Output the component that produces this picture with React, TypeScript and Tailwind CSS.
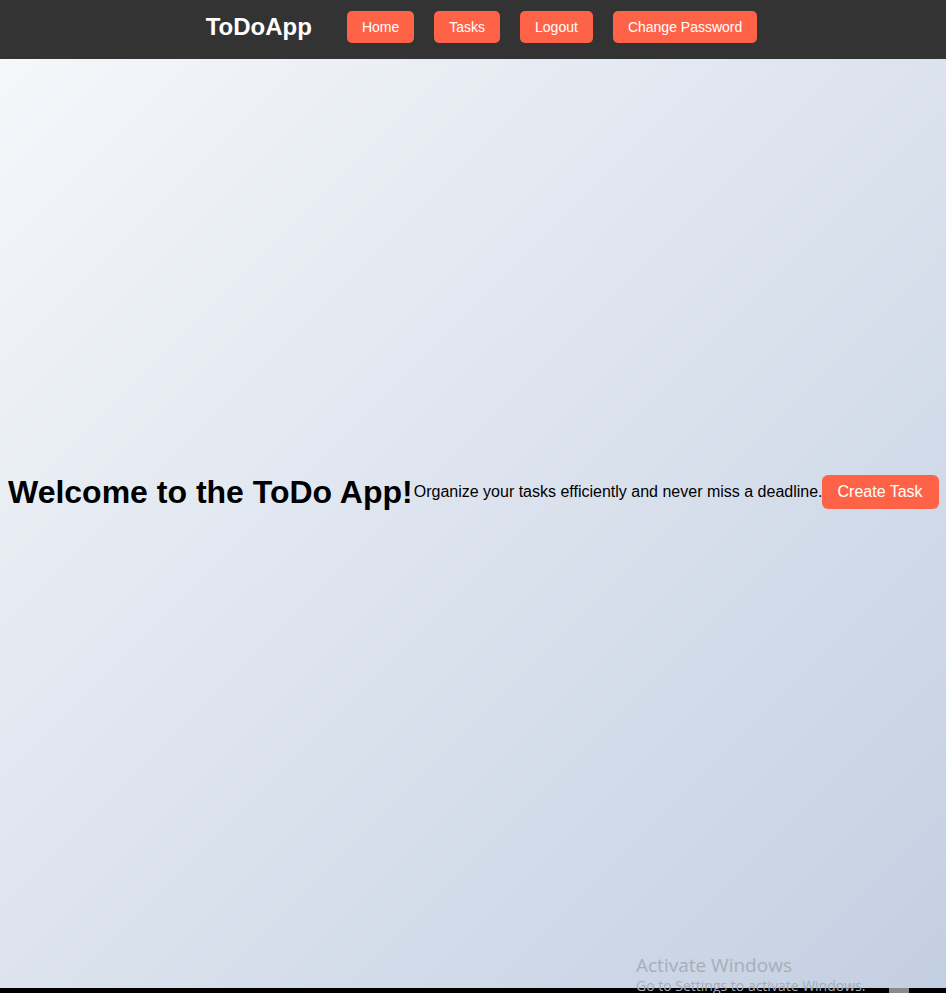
export default function App() {
  return (
    <div className="relative flex flex-col h-[993px] w-full overflow-hidden font-['Liberation_Sans',Arial,sans-serif]">
      <header className="flex items-start justify-center h-[59px] pt-[11px] pl-[17px] bg-[#333333] shrink-0">
        <div className="flex items-center h-[32px] mr-[35px] text-white text-2xl font-bold">ToDoApp</div>
        <nav className="flex gap-5">
          {["Home", "Tasks", "Logout", "Change Password"].map((label) => (
            <button
              key={label}
              className="h-[32px] px-[15px] rounded-[5px] bg-[#ff6347] text-white text-sm"
            >
              {label}
            </button>
          ))}
        </nav>
      </header>

      <main className="flex flex-col justify-center flex-1 pb-[63px] bg-[linear-gradient(135deg,#f5f7fa_0%,#c3cfe2_100%)]">
        <div className="flex items-center px-2 whitespace-nowrap">
          <h1 className="shrink-0 text-[32px] font-bold text-black leading-tight">Welcome to the ToDo App!</h1>
          <p className="shrink-0 text-base text-black leading-normal ml-px">Organize your tasks efficiently and never miss a deadline.</p>
          <button className="shrink-0 -ml-px h-[34px] px-4 rounded-[6px] bg-[#ff6347] text-white text-base">Create Task</button>
        </div>
      </main>

      <div className="relative h-[5px] bg-black shrink-0">
        <div className="absolute left-[889px] top-0 w-[20px] h-[5px] bg-[#8a8a8a]" />
      </div>

      <div className="absolute left-[636px] top-[953px] text-[#a7adb8] font-['Open_Sans','Noto_Sans',sans-serif] pointer-events-none">
        <div className="text-[19px] leading-[24px]">Activate Windows</div>
        <div className="text-[14px] leading-[18px]">Go to Settings to activate Windows.</div>
      </div>
    </div>
  );
}
